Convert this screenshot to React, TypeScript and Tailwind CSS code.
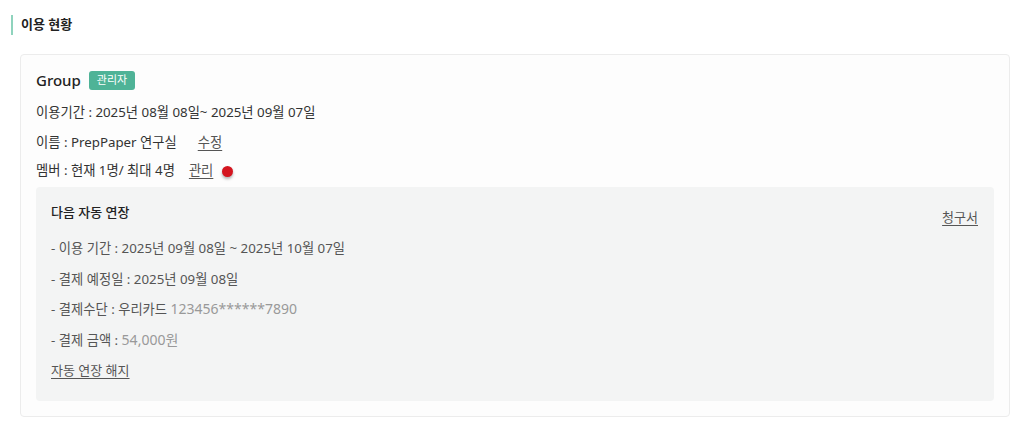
import React from 'react';

const font = { fontFamily: '"Noto Sans", "Noto Sans CJK KR", sans-serif' };

const renewal = [
  { label: '- 이용 기간 : ', value: '2025년 09월 08일 ~ 2025년 10월 07일', light: false },
  { label: '- 결제 예정일 : ', value: '2025년 09월 08일', light: false },
  { label: '- 결제수단 : 우리카드 ', value: '123456******7890', light: true },
  { label: '- 결제 금액 : ', value: '54,000원', light: true },
];

export default function App() {
  return (
    <div className="h-[430px] w-[1024px] bg-white text-[#333]" style={font}>
      <div className="px-[11px] pt-[15px]">
        <h2 className="flex h-[20px] items-center border-l-2 border-[#8fd3bd] pl-[8px] text-[13px] font-bold text-[#222]">
          이용 현황
        </h2>
      </div>

      <div className="ml-[20px] mr-[14px] mt-[19px] rounded-[4px] border border-[#ececec] bg-[#fdfdfd] px-[15px] pb-[15px] pt-[14px]">
        <div className="flex h-[22px] items-center gap-[8px]">
          <span className="text-[15px] font-medium text-[#222]">Group</span>
          <span className="flex h-[19px] items-center rounded-[3px] bg-[#4fb397] px-[8px] text-[11px] text-white">
            관리자
          </span>
        </div>

        <div className="mt-[12px] flex h-[20px] items-center text-[13.3px] text-[#333]">
          이용기간 : 2025년 08월 08일~ 2025년 09월 07일
        </div>
        <div className="mt-[10px] flex h-[20px] items-center text-[13.3px] text-[#333]">
          <span>이름 : PrepPaper 연구실</span>
          <button className="ml-[21px] text-[#555] underline underline-offset-[3px]">수정</button>
        </div>
        <div className="mt-[8px] flex h-[20px] items-center text-[13.3px] text-[#333]">
          <span>멤버 : 현재 1명/ 최대 4명</span>
          <button className="ml-[14px] text-[#555] underline underline-offset-[3px]">관리</button>
          <span className="ml-[9px] h-[11px] w-[11px] rounded-full bg-[#d4151f] shadow-[0_2px_3px_rgba(0,0,0,0.3)]" />
        </div>

        <div className="mt-[6px] rounded-[4px] bg-[#f3f4f4] px-[15px] pb-[20px] pt-[15px]">
          <div className="flex justify-between">
            <div className="h-[20px] text-[13px] font-medium leading-[20px] text-[#222]">다음 자동 연장</div>
            <button className="mr-[1px] mt-[6px] h-[20px] text-[13px] text-[#555] underline underline-offset-[3px]">
              청구서
            </button>
          </div>
          <div className="mt-[10px] flex flex-col gap-[10.5px]">
            {renewal.map((r) => (
              <div key={r.label} className="h-[20px] text-[13.3px] leading-[20px] text-[#555]">
                {r.label}
                <span className={r.light ? 'text-[14px] text-[#999]' : ''}>{r.value}</span>
              </div>
            ))}
          </div>
          <button className="mt-[11px] h-[20px] text-[13px] text-[#555] underline underline-offset-[3px]">
            자동 연장 해지
          </button>
        </div>
      </div>
    </div>
  );
}
